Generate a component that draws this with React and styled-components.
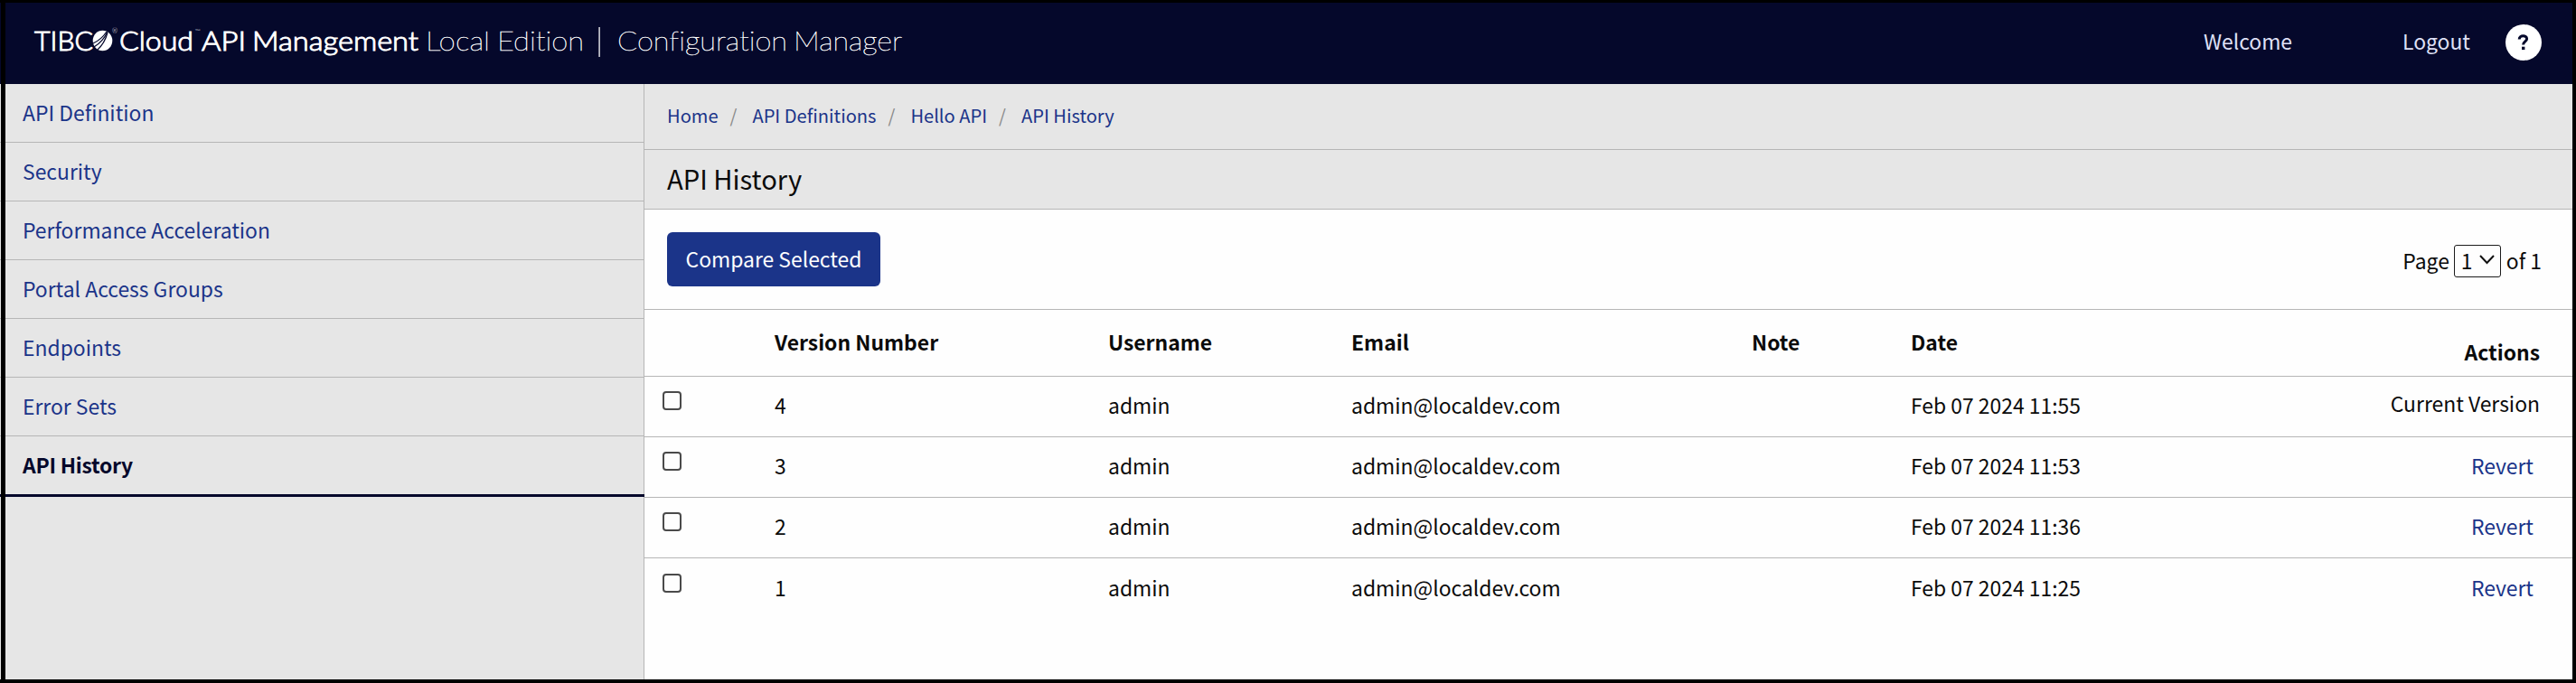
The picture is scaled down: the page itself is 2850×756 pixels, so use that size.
import React from 'react';
import styled, { createGlobalStyle, css } from 'styled-components';

const sans = `"Noto Sans CJK SC", "Noto Sans", sans-serif`;
const navy = '#05082b';
const blue = '#1b3489';
const line = '#b6b6b6';
const panel = '#e6e6e6';

const Global = createGlobalStyle`
  * { box-sizing: border-box; }
  html, body { margin: 0; padding: 0; background: #fff; }
  body { font-family: ${sans}; font-size: 22.9px; color: #0b0b0b; overflow: hidden; }
`;

const Frame = styled.div`
  width: 2850px;
  height: 756px;
  background: #fefefe;
  border-style: solid;
  border-color: #000;
  border-width: 3px 4px 4px 0;
  display: flex;
  flex-direction: column;
  position: relative;
`;

const FrameEdge = styled.div`
  position: absolute;
  left: 1px;
  top: -3px;
  bottom: -4px;
  width: 5px;
  background: #000;
`;

const Header = styled.header`
  height: 90px;
  flex: none;
  background: ${navy};
  display: flex;
  align-items: center;
  padding: 0 34px 2px 0;
`;

const Wordmark = styled.svg`
  display: block;
  width: 1020px;
  height: 88px;
  margin-right: auto;
  font-variant-ligatures: none;
`;

const HeaderLink = styled.a`
  color: #dfe0f6;
  line-height: 30px;
  white-space: nowrap;
  padding-bottom: 4px;
  margin-right: ${(p) => p.$gap}px;
`;

const Help = styled.span`
  width: 40px;
  height: 40px;
  border-radius: 50%;
  background: #fff;
  display: flex;
  align-items: center;
  justify-content: center;
`;

const Body = styled.div`
  flex: 1;
  display: flex;
  min-height: 0;
`;

const Sidebar = styled.nav`
  width: 713px;
  flex: none;
  background: ${panel};
  border-right: 1px solid ${line};
`;

const NavItem = styled.a`
  display: flex;
  align-items: center;
  height: 65px;
  padding: 0 0 2px 25px;
  border-bottom: 1px solid ${line};
  color: ${blue};
  ${(p) =>
    p.$active &&
    css`
      height: 67px;
      margin-right: -1px;
      color: ${navy};
      font-weight: 700;
      letter-spacing: -0.25px;
      border-bottom: 3px solid ${navy};
    `}
`;

const Main = styled.main`
  flex: 1;
  min-width: 0;
`;

const Breadcrumb = styled.div`
  height: 73px;
  display: flex;
  align-items: center;
  padding: 0 0 3px 25px;
  background: ${panel};
  border-bottom: 1px solid ${line};
  font-size: 20.1px;
`;

const Crumb = styled.a`
  color: ${blue};
`;

const Slash = styled.span`
  color: #8a8a8a;
  margin: 0 17px 0 13px;
`;

const Title = styled.h1`
  margin: 0;
  height: 66px;
  display: flex;
  align-items: center;
  padding: 0 0 4px 25px;
  background: ${panel};
  border-bottom: 1px solid ${line};
  font-size: 29.2px;
  font-weight: 400;
`;

const Toolbar = styled.div`
  height: 111px;
  display: flex;
  align-items: center;
  justify-content: space-between;
  padding: 0 34px 0 25px;
  border-bottom: 1px solid ${line};
`;

const Button = styled.button`
  width: 236px;
  height: 60px;
  padding: 0 0 3px;
  border: 0;
  border-radius: 6px;
  background: ${blue};
  color: #fff;
  font: inherit;
`;

const Pager = styled.div`
  display: flex;
  align-items: center;
  padding-top: 1px;
`;

const PageSelect = styled.span`
  width: 52px;
  height: 36px;
  margin: 2px 6px 0 5px;
  padding: 0 6px 2px 7px;
  border: 1px solid #1c1c1c;
  border-radius: 3px;
  display: flex;
  align-items: center;
  justify-content: space-between;
`;

const Row = styled.div`
  display: grid;
  grid-template-columns: 144px 369px 269px 443px 176px 1fr;
  height: ${(p) => (p.$head ? 74 : 67)}px;
  align-items: center;
  padding: 0 36px ${(p) => (p.$head ? 3 : 4)}px 0;
  font-weight: ${(p) => (p.$head ? 700 : 400)};
  border-bottom: ${(p) => (p.$last ? 0 : 1)}px solid ${line};
`;

const Cell = styled.span`
  white-space: nowrap;
`;

const LastCell = styled(Cell)`
  display: flex;
  justify-content: space-between;
`;

const Dropped = styled.span`
  margin: 11px 0 -11px;
`;

const Current = styled.span`
  margin: -2px 0 2px;
`;

const Revert = styled.a`
  color: ${blue};
  margin-right: 7px;
`;

const Check = styled.span`
  display: block;
  width: 21px;
  height: 21px;
  margin: 0 0 9px 20px;
  border: 2px solid #4a4a4a;
  border-radius: 4px;
`;

const nav = ['API Definition', 'Security', 'Performance Acceleration', 'Portal Access Groups', 'Endpoints', 'Error Sets', 'API History'];
const crumbs = ['Home', 'API Definitions', 'Hello API', 'API History'];
const versions = [
  { n: 4, date: 'Feb 07 2024 11:55', current: true },
  { n: 3, date: 'Feb 07 2024 11:53' },
  { n: 2, date: 'Feb 07 2024 11:36' },
  { n: 1, date: 'Feb 07 2024 11:25' },
];

function Word({ x, w, size = 30, thin, children, y = 56 }) {
  return (
    <text
      x={x}
      y={y}
      fontSize={size}
      fontWeight={thin ? 100 : 300}
      stroke="#fff"
      strokeWidth={thin ? 0.5 : size < 10 ? 0 : 1}
      textLength={w}
      lengthAdjust="spacingAndGlyphs"
    >
      {children}
    </text>
  );
}

function Logo() {
  return (
    <Wordmark viewBox="0 3 1020 88" fill="#fff" fontFamily="Lato, sans-serif">
      <Word x={38} w={65}>TIBC</Word>
      <ellipse cx="113.5" cy="45" rx="10.8" ry="11.3" />
      <g fill="none" stroke={navy} strokeWidth="1.2">
        <path d="M103 48 Q112 44 118 35" />
        <path d="M104 52 Q114 46 119 35" />
        <path d="M107 56 Q116 48 119 36" />
      </g>
      <Word x={124} w={6} y={37} size={7}>®</Word>
      <Word x={132} w={82}>Cloud</Word>
      <Word x={216} w={6} y={36} size={5}>™</Word>
      <Word x={223} w={49}>API</Word>
      <Word x={279} w={184}>Management</Word>
      <Word x={471} w={71} thin>Local</Word>
      <Word x={550} w={96} thin>Edition</Word>
      <rect x="662.3" y="30" width="1.6" height="33" opacity=".8" />
      <Word x={683} w={188} thin>Configuration</Word>
      <Word x={878} w={120} thin>Manager</Word>
    </Wordmark>
  );
}

export default function App() {
  return (
    <>
      <Global />
      <Frame>
        <Header>
          <Logo />
          <HeaderLink $gap={122}>Welcome</HeaderLink>
          <HeaderLink $gap={39}>Logout</HeaderLink>
          <Help>
            <svg width="14" height="18" viewBox="0 0 14 18" fill="none" stroke={navy} strokeWidth="3">
              <path d="M2.2 5.4 C2.2 .8 10.6 .6 10.6 5 C10.6 8 6.6 7.8 6.6 11.6" />
              <path d="M5 15.4 H8.4" strokeWidth="3.4" />
            </svg>
          </Help>
        </Header>
        <Body>
          <Sidebar>
            {nav.map((n, i) => (
              <NavItem key={n} $active={i === nav.length - 1}>{n}</NavItem>
            ))}
          </Sidebar>
          <Main>
            <Breadcrumb>
              {crumbs.map((c, i) => (
                <React.Fragment key={c}>
                  {i > 0 && <Slash>/</Slash>}
                  <Crumb>{c}</Crumb>
                </React.Fragment>
              ))}
            </Breadcrumb>
            <Title>API History</Title>
            <Toolbar>
              <Button>Compare Selected</Button>
              <Pager>
                <span>Page</span>
                <PageSelect>
                  <span>1</span>
                  <svg width="17" height="11" viewBox="0 0 17 11" fill="none" stroke="#111" strokeWidth="2">
                    <path d="M1 1 L8.5 9 L16 1" />
                  </svg>
                </PageSelect>
                <span>of 1</span>
              </Pager>
            </Toolbar>
            <Row $head>
              <span />
              <Cell>Version Number</Cell>
              <Cell>Username</Cell>
              <Cell>Email</Cell>
              <Cell>Note</Cell>
              <LastCell>
                <span>Date</span>
                <Dropped>Actions</Dropped>
              </LastCell>
            </Row>
            {versions.map((v, i) => (
              <Row key={v.n} $last={i === versions.length - 1}>
                <Check role="checkbox" aria-checked="false" />
                <Cell>{v.n}</Cell>
                <Cell>admin</Cell>
                <Cell>admin@localdev.com</Cell>
                <span />
                <LastCell>
                  <span>{v.date}</span>
                  {v.current ? <Current>Current Version</Current> : <Revert>Revert</Revert>}
                </LastCell>
              </Row>
            ))}
          </Main>
        </Body>
        <FrameEdge />
      </Frame>
    </>
  );
}
